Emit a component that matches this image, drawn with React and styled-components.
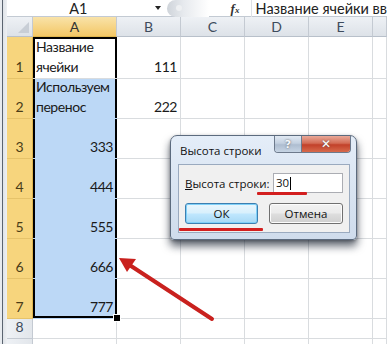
import React from "react";
import styled, { createGlobalStyle, css } from "styled-components";

const Global = createGlobalStyle`
  html, body { margin: 0; padding: 0; background: #fff; }
  body { width: 387px; height: 344px; overflow: hidden; font-family: Lato, "Liberation Sans", sans-serif; }
  * { box-sizing: border-box; }
`;

const Page = styled.div`
  position: relative;
  width: 387px;
  height: 344px;
  overflow: hidden;
  display: flex;
  background: #fff;
`;

const LeftStrip = styled.div`
  width: 7px;
  flex: none;
  background: linear-gradient(90deg, #e8ebef 0, #e8ebef 2px, #5b6470 2px, #5b6470 3px, #dfe3e8 3px, #eef0f3 100%);
`;

const Main = styled.div`
  flex: 1;
  display: flex;
  flex-direction: column;
  min-width: 0;
`;

const FormulaBar = styled.div`
  height: 17px;
  display: flex;
  align-items: center;
  background: #fff;
  border-bottom: 1px solid #c3cad3;
  font-family: Lato, "Liberation Sans", sans-serif;
  font-size: 14.5px;
  color: #222;
  white-space: nowrap;
`;

const NameBox = styled.div`
  width: 143px;
  text-align: center;
  line-height: 17px;
`;

const DropArrow = styled.div`
  width: 0;
  height: 0;
  margin-left: 5px;
  border-left: 3.5px solid transparent;
  border-right: 3.5px solid transparent;
  border-top: 4px solid #222;
`;

const RoundBtn = styled.div`
  width: 42px;
  height: 17px;
  margin-left: 6px;
  border-radius: 9px 0 0 9px;
  background: linear-gradient(90deg, #cfd4da 0%, #e7eaee 40%, #fff 100%);
  position: relative;
  &::after {
    content: "";
    position: absolute;
    left: 9px;
    top: 5px;
    width: 6px;
    height: 6px;
    border-radius: 50%;
    background: #eef0f2;
  }
`;

const Fx = styled.div`
  margin-left: 22px;
  font-family: "Liberation Serif", serif;
  font-style: italic;
  font-weight: bold;
  font-size: 13px;
  color: #333;
  width: 21px;
  border-right: 1px solid #dde1e6;
  height: 17px;
  line-height: 17px;
  & sub { font-size: 9px; vertical-align: baseline; }
`;

const FormulaText = styled.div`
  margin-left: 4px;
  line-height: 17px;
`;

const Band = styled.div`
  height: 3px;
  background: #dfe3e8;
`;

const Grid = styled.div`
  display: grid;
  grid-template-columns: 26px 84px 64px 64px 64px 64px 1fr;
  grid-template-rows: 20px 42px repeat(6, 40px) 20px 20px;
  font-family: Lato, "Liberation Sans", sans-serif;
`;

const headerBase = css`
  display: flex;
  align-items: center;
  justify-content: center;
  font-size: 14px;
  color: #3e4b5c;
  border-right: 1px solid #c4cad2;
  border-bottom: 1px solid #b8c0ca;
`;

const Corner = styled.div`
  ${headerBase};
  position: relative;
  background: linear-gradient(#eef1f5, #dde2e8);
  &::after {
    content: "";
    position: absolute;
    right: 3px;
    bottom: 3px;
    border-left: 11px solid transparent;
    border-bottom: 11px solid #c8ced6;
  }
`;

const ColHead = styled.div`
  ${headerBase};
  background: ${(p) =>
    p.$active
      ? "linear-gradient(#f9e3a9, #f3c766)"
      : "linear-gradient(#eef1f5, #dde2e8)"};
  ${(p) => p.$active && "border-bottom-color: #e0b64e; color: #333;"}
`;

const RowHead = styled.div`
  ${headerBase};
  align-items: flex-end;
  padding-bottom: 1px;
  line-height: 20px;
  overflow: hidden;
  background: ${(p) => (p.$active ? "#f7d57d" : "linear-gradient(90deg, #eef1f5, #e2e6eb)")};
  color: ${(p) => (p.$active ? "#4a3c18" : "#3e4b5c")};
  border-right-color: ${(p) => (p.$active ? "#e0b64e" : "#c4cad2")};
  border-bottom-color: ${(p) => (p.$active ? "#e6c36a" : "#c4cad2")};
`;

const Cell = styled.div`
  position: relative;
  display: flex;
  flex-direction: column;
  justify-content: flex-end;
  align-items: ${(p) => (p.$num ? "flex-end" : "flex-start")};
  padding: 0 ${(p) => (p.$sel ? 4 : 3)}px 1px ${(p) => (p.$sel ? 3 : 2)}px;
  font-size: 14px;
  letter-spacing: -0.45px;
  line-height: 20px;
  white-space: nowrap;
  color: #1a1a1a;
  border-right: 1px solid #d9dcdf;
  border-bottom: 1px solid #d9dcdf;
  background: ${(p) => (p.$fill ? "#bcd8f6" : "#fff")};
  ${(p) =>
    p.$sel &&
    css`
      border-right: none;
      box-shadow: inset 2px 0 0 #000, inset -2px 0 0 #000
        ${p.$top ? ", inset 0 2px 0 #000" : ""}
        ${p.$bottom ? ", inset 0 -2px 0 #000" : ""};
    `}
  ${(p) => p.$sel && p.$fill && "border-bottom-color: #bcd8f6;"}
`;

const FillHandle = styled.div`
  position: absolute;
  right: -3px;
  bottom: -3px;
  width: 6px;
  height: 6px;
  background: #000;
  outline: 1px solid #fff;
  z-index: 2;
`;

const Dialog = styled.div`
  position: absolute;
  left: 170px;
  top: 135px;
  width: 187px;
  height: 105px;
  border: 1px solid #5c6b7e;
  border-radius: 7px 7px 4px 4px;
  background: linear-gradient(#e4edf8, #cfdcec);
  box-shadow: 0 6px 9px rgba(10, 20, 35, 0.65), 0 1px 3px rgba(0, 0, 0, 0.3);
  padding: 0 6px 6px 7px;
  display: flex;
  flex-direction: column;
  font-family: "Open Sans", "Noto Sans", sans-serif;
  font-size: 11.5px;
  color: #111;
  white-space: nowrap;
`;

const TitleBar = styled.div`
  height: 28px;
  display: flex;
  align-items: flex-start;
`;

const Title = styled.div`
  padding: 7px 0 0 2px;
  font-size: 11.5px;
`;

const Caption = styled.div`
  margin-left: auto;
  margin-right: -1px;
  display: flex;
  border: 1px solid #6d7a8c;
  border-top: none;
  border-radius: 0 0 4px 4px;
  overflow: hidden;
  height: 17px;
`;

const CapBtn = styled.div`
  width: ${(p) => p.$w}px;
  height: 100%;
  display: flex;
  align-items: center;
  justify-content: center;
  font-family: "DejaVu Sans", sans-serif;
  font-weight: bold;
  font-size: ${(p) => (p.$close ? 12 : 11)}px;
  text-shadow: 0 0 2px #555;
  background: ${(p) =>
    p.$close
      ? "linear-gradient(#e9a898 0%, #d36c55 45%, #c2412a 55%, #d76a4c 100%)"
      : "linear-gradient(#e1e9f3 0%, #c3d0e0 45%, #aebdd0 55%, #c6d4e4 100%)"};
  border-right: ${(p) => (p.$close ? "none" : "1px solid #6d7a8c")};
  color: ${(p) => (p.$close ? "#fff" : "#f4f7fb")};
`;

const Panel = styled.div`
  flex: 1;
  background: #f0f0f0;
  border: 1px solid #9aaabf;
  padding: 8px 6px 0 6px;
  display: flex;
  flex-direction: column;
`;

const FieldRow = styled.div`
  display: flex;
  align-items: center;
  height: 20px;
`;

const Label = styled.div`
  font-size: 11.5px;
  & u { text-decoration: underline; }
`;

const Input = styled.div`
  margin-left: auto;
  width: 70px;
  height: 20px;
  background: #fff;
  border: 1px solid #abadb3;
  padding-left: 2px;
  font-size: 11.5px;
  line-height: 18px;
  display: flex;
  align-items: center;
`;

const Caret = styled.span`
  display: inline-block;
  width: 1px;
  height: 13px;
  background: #000;
  margin-left: 1px;
`;

const ButtonRow = styled.div`
  margin-top: 10px;
  display: flex;
  justify-content: space-between;
`;

const Button = styled.div`
  width: ${(p) => p.$w}px;
  height: 21px;
  border-radius: 3px;
  display: flex;
  align-items: center;
  justify-content: center;
  font-size: 11.5px;
  border: 1px solid ${(p) => (p.$default ? "#3c7fb1" : "#707070")};
  background: ${(p) =>
    p.$default
      ? "linear-gradient(#eaf6fd 0%, #d9f0fc 45%, #bee6fd 55%, #a7d9f5 100%)"
      : "linear-gradient(#f2f2f2 0%, #ebebeb 45%, #dddddd 55%, #cfcfcf 100%)"};
  box-shadow: inset 0 0 0 1px ${(p) => (p.$default ? "#7fd0f8" : "#fcfcfc")};
`;

const RedMark = styled.div`
  position: absolute;
  left: ${(p) => p.$x}px;
  top: ${(p) => p.$y}px;
  width: ${(p) => p.$w}px;
  height: 3px;
  background: #d31f1f;
  border-radius: 1px;
`;

const ArrowSvg = styled.svg`
  position: absolute;
  left: 0;
  top: 0;
  pointer-events: none;
`;

const rowsData = [
  { n: 1, a: ["Название", "ячейки"], b: "111" },
  { n: 2, a: ["Используем", "перенос"], b: "222" },
  { n: 3, a: "333" },
  { n: 4, a: "444" },
  { n: 5, a: "555" },
  { n: 6, a: "666" },
  { n: 7, a: "777" },
];

const cols = ["A", "B", "C", "D", "E", ""];

export default function App() {
  return (
    <>
      <Global />
      <Page>
        <LeftStrip />
        <Main>
          <FormulaBar>
            <NameBox>A1</NameBox>
            <DropArrow />
            <RoundBtn />
            <Fx>
              f<sub>x</sub>
            </Fx>
            <FormulaText>Название ячейки вв</FormulaText>
          </FormulaBar>
          <Band />
          <Grid>
            <Corner />
            {cols.map((c, i) => (
              <ColHead key={i} $active={c === "A"}>
                {c}
              </ColHead>
            ))}
            {rowsData.map((r) => (
              <React.Fragment key={r.n}>
                <RowHead $active>{r.n}</RowHead>
                <Cell
                  $sel
                  $fill={r.n > 1}
                  $top={r.n === 1}
                  $bottom={r.n === 7}
                  $num={!Array.isArray(r.a)}
                >
                  {Array.isArray(r.a) ? r.a.map((t) => <span key={t}>{t}</span>) : r.a}
                  {r.n === 7 && <FillHandle />}
                </Cell>
                <Cell $num>{r.b || ""}</Cell>
                <Cell />
                <Cell />
                <Cell />
                <Cell />
              </React.Fragment>
            ))}
            {[8, 9].map((n) => (
              <React.Fragment key={n}>
                <RowHead>{n === 8 ? n : ""}</RowHead>
                <Cell />
                <Cell />
                <Cell />
                <Cell />
                <Cell />
                <Cell />
              </React.Fragment>
            ))}
          </Grid>
        </Main>

        <Dialog>
          <TitleBar>
            <Title>Высота строки</Title>
            <Caption>
              <CapBtn $w={27}>?</CapBtn>
              <CapBtn $w={48} $close>
                ✕
              </CapBtn>
            </Caption>
          </TitleBar>
          <Panel>
            <FieldRow>
              <Label>
                <u>В</u>ысота строки:
              </Label>
              <Input>
                30
                <Caret />
              </Input>
            </FieldRow>
            <ButtonRow>
              <Button $w={73} $default>
                ОК
              </Button>
              <Button $w={74}>Отмена</Button>
            </ButtonRow>
          </Panel>
          <RedMark $x={86} $y={56} $w={50} />
          <RedMark $x={8} $y={92} $w={84} />
        </Dialog>

        <ArrowSvg width="387" height="344" viewBox="0 0 387 344">
          <line x1="212" y1="319" x2="128" y2="264" stroke="#c9211e" strokeWidth="4" strokeLinecap="round" />
          <polygon points="119,258 127,272 136,259" fill="#c9211e" />
        </ArrowSvg>
      </Page>
    </>
  );
}
